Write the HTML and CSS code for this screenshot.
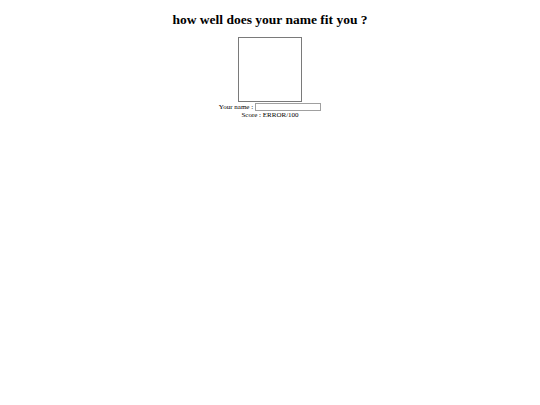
FILE: index.html
```html
<!DOCTYPE html>
<html>
<head>
<meta charset="utf-8">
<link rel="stylesheet" href="styles.css">
</head>
<body>
<h1 class="title">how well does your name fit you ?</h1>
<div class="stage">
  <div class="canvas"></div>
  <div class="row">Your name : <input class="name" type="text"></div>
  <div class="score">Score : ERROR/100</div>
</div>
</body>
</html>
```
FILE: styles.css
```css
html, body { margin: 0; padding: 0; background: #fff; }
body {
  font-family: "Liberation Serif", "Times New Roman", serif;
  color: #000;
  padding-top: 4px;
}
.title {
  font-size: 13.5px;
  font-weight: bold;
  text-align: center;
  margin: 8px 0 0 0;
  line-height: 16px;
}
.stage {
  display: flex;
  flex-direction: column;
  align-items: center;
  font-size: 7px;
  line-height: 8px;
  padding-top: 9px;
}
.canvas {
  width: 62px;
  height: 63px;
  border: 1px solid #7a7a7a;
}
.row {
  display: flex;
  align-items: center;
  margin-top: 1px;
}
.name {
  margin: 0 0 0 2px;
  padding: 0;
  width: 64px;
  height: 6px;
  border: 1px solid #a0a0a0;
  font-size: 6px;
}
.score { margin-top: 0; }
```
